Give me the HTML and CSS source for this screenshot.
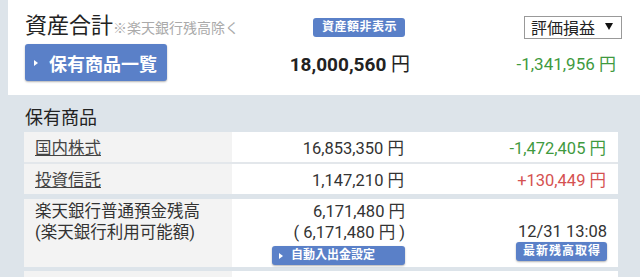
FILE: index.html
```html
<!DOCTYPE html>
<html lang="ja">
<head>
    <meta charset="UTF-8">
    <meta name="viewport" content="width=device-width, initial-scale=1.0">
    <title>資産合計</title>
    <link rel="stylesheet" href="styles.css">
</head>
<body>
    <div class="summary">
        <div class="title">資産合計<span class="note">※楽天銀行残高除く</span></div>
        <div class="hide-wrap"><span class="badge">資産額非表示</span></div>
        <div class="picker">評価損益<span class="arrow"></span></div>

        <div><a class="list-btn"><span class="tri"></span>保有商品一覧</a></div>
        <div class="total"><b>18,000,560</b> 円</div>
        <div class="total-gain minus">-1,341,956 円</div>
    </div>

    <div class="holdings">
        <h3>保有商品</h3>

        <div class="row line">
            <div class="label"><a href="#">国内株式</a></div>
            <div class="value">16,853,350 円</div>
            <div class="gain minus">-1,472,405 円</div>
        </div>
        <div class="row">
            <div class="label"><a href="#">投資信託</a></div>
            <div class="value">1,147,210 円</div>
            <div class="gain plus">+130,449 円</div>
        </div>

        <div class="row bank">
            <div class="label">楽天銀行普通預金残高<br>(楽天銀行利用可能額)</div>
            <div class="value">
                <div>6,171,480 円</div>
                <div>( 6,171,480 円 )</div>
                <span class="small-btn"><span class="tri"></span>自動入出金設定</span>
            </div>
            <div class="gain">
                <div class="time">12/31 13:08</div>
                <span class="small-btn wide">最新残高取得</span>
            </div>
        </div>

        <div class="row last">
            <div class="label"></div>
            <div class="value"></div>
            <div class="gain"></div>
        </div>
    </div>
</body>
</html>
```

FILE: styles.css
```css
body{
    margin: 0;
    background-color: #dde4ea;
    font-family: Roboto, "Noto Sans CJK JP", sans-serif;
    color: #333;
    overflow: hidden;
}
.summary{
    margin-left: 8px;
    height: 95px;
    box-sizing: border-box;
    padding: 14px 18px 0 17px;
    background-color: white;
    display: grid;
    grid-template-columns: 235px 152px 1fr;
    grid-template-rows: 26px 37px;
    row-gap: 4px;
    align-items: center;
}
.title{
    font-size: 22px;
    line-height: 26px;
    white-space: nowrap;
    color: #222;
}
.note{
    font-size: 14px;
    color: #aaa;
}
.hide-wrap{
    display: flex;
    justify-content: flex-end;
    padding-right: 7px;
}
.badge{
    background-color: #5a80c8;
    color: white;
    font-weight: bold;
    font-size: 12px;
    line-height: 19px;
    padding: 0 8px 0 9px;
    letter-spacing: 0.5px;
    border-radius: 3px;
}
.picker{
    justify-self: end;
    width: 98px;
    height: 23px;
    box-sizing: border-box;
    border: 1px solid #999;
    font-size: 16px;
    line-height: 23px;
    padding-left: 6px;
    color: #222;
    display: flex;
    justify-content: space-between;
}
.arrow{
    width: 0;
    height: 0;
    margin: 6px 8px 0 0;
    border-top: 7px solid #111;
    border-left: 4px solid transparent;
    border-right: 4px solid transparent;
}
.list-btn{
    display: inline-flex;
    align-items: center;
    width: 142px;
    height: 37px;
    box-sizing: border-box;
    padding-left: 9px;
    background-color: #5a80c8;
    color: white;
    font-weight: bold;
    font-size: 18px;
    border-radius: 3px;
    box-shadow: 0 1px 2px rgba(0, 0, 0, 0.3);
}
.tri{
    display: inline-block;
    border-left: 4px solid white;
    border-top: 3px solid transparent;
    border-bottom: 3px solid transparent;
    margin-right: 11px;
}
.total{
    text-align: right;
    font-size: 19px;
    margin-right: 2px;
    color: #222;
}
.total-gain{
    text-align: right;
    font-size: 17px;
    margin-right: 6px;
}
.minus{
    color: #3f9a3f;
}
.plus{
    color: #d55151;
}
.holdings{
    padding: 0 22px 0 24px;
}
h3{
    margin: 0;
    padding: 9px 0 0 1px;
    font-size: 18px;
    font-weight: normal;
    line-height: 28px;
    color: #222;
}
.row{
    display: grid;
    grid-template-columns: 208px 180px 1fr;
    height: 30px;
    background-color: white;
    font-size: 16.5px;
}
.row.line{
    border-bottom: 2px solid #e3e7eb;
}
.label{
    background-color: #f3f3f3;
    padding-left: 11px;
    display: flex;
    align-items: center;
}
.label a{
    color: #444;
}
.value{
    display: flex;
    align-items: center;
    justify-content: flex-end;
    padding-right: 8px;
}
.gain{
    display: flex;
    align-items: center;
    justify-content: flex-end;
    padding-right: 12px;
}
.bank{
    margin-top: 5px;
    height: 68px;
    line-height: 21px;
}
.bank .label{
    display: block;
    padding-top: 2px;
}
.bank .value{
    display: flex;
    flex-direction: column;
    align-items: flex-end;
    justify-content: flex-start;
    padding-top: 2px;
    padding-right: 7px;
}
.bank .gain{
    flex-direction: column;
    align-items: flex-end;
    justify-content: flex-end;
    padding-bottom: 6px;
    padding-right: 11px;
}
.time{
    line-height: 20px;
}
.small-btn{
    display: inline-flex;
    align-items: center;
    height: 19px;
    padding: 0 7px;
    background-color: #5a80c8;
    color: white;
    font-size: 12px;
    font-weight: bold;
    line-height: 19px;
    border-radius: 3px;
    box-shadow: 0 1px 2px rgba(0, 0, 0, 0.3);
}
.small-btn.wide{
    width: 91px;
    box-sizing: border-box;
    justify-content: center;
    letter-spacing: 1px;
    padding: 0 0 0 1px;
}
.bank .value .small-btn{
    margin-top: 3px;
    width: 133px;
    box-sizing: border-box;
}
.bank .value .tri{
    margin-right: 8px;
}
.last{
    margin-top: 4px;
    height: 6px;
}
```
